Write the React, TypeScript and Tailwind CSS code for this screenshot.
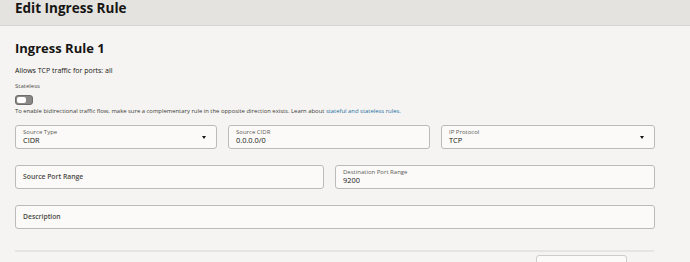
const Field = ({ label, value, select, placeholder }: { label?: string; value?: string; select?: boolean; placeholder?: string }) => {
  return (
    <div className="relative h-6 bg-[#fbfaf8] border border-[#bdbbb7] rounded-[3px] px-[7px] flex flex-col justify-center">
      {placeholder ? (
        <span className="text-[6.8px] font-semibold text-[#4a4945] leading-none">{placeholder}</span>
      ) : (
        <>
          <span className="text-[6px] text-[#5c5b57] leading-none">{label}</span>
          <span className="text-[7.4px] text-[#161513] leading-none mt-[2px]">{value}</span>
        </>
      )}
      {select && (
        <span className="absolute right-[10px] top-[10px] w-0 h-0 border-l-[2.5px] border-r-[2.5px] border-t-[3px] border-l-transparent border-r-transparent border-t-[#161513]" />
      )}
    </div>
  );
};

export default function App() {
  return (
    <div className="w-[690px] h-[262px] overflow-hidden bg-[#f5f4f2] text-[#161513]" style={{ fontFamily: '"Open Sans", "Noto Sans", sans-serif' }}>
      <header className="h-[26px] bg-[#e4e3df] border-b border-[#d6d5d1] px-[15px] flex items-end">
        <h1 className="text-[13.5px] font-bold leading-none -translate-y-[10px]">Edit Ingress Rule</h1>
      </header>

      <div className="px-[15px]">
        <h2 className="mt-[16px] text-[13px] font-bold leading-none">Ingress Rule 1</h2>
        <p className="mt-[12px] text-[7px] leading-none">Allows TCP traffic for ports: all</p>
        <p className="mt-[9px] text-[6px] leading-none text-[#4f4e4a]">Stateless</p>
        <div className="mt-[6px] w-[18px] h-[10px] rounded-[3px] border-[1.5px] border-[#6f6d69] bg-[#8a8884] p-[1px] flex">
          <div className="w-[9px] h-full rounded-[2px] bg-white" />
        </div>
        <p className="mt-[4px] text-[5.9px] leading-none text-[#3d3c38]">
          To enable bidirectional traffic flow, make sure a complementary rule in the opposite direction exists. Learn about{" "}
          <a className="text-[#1e6fa0]">stateful and stateless rules.</a>
        </p>

        <div className="w-[640px] mt-[10px] flex flex-col gap-[16px]">
          <div className="grid grid-cols-[202px_202px_1fr] gap-[11px]">
            <Field label="Source Type" value="CIDR" select />
            <Field label="Source CIDR" value="0.0.0.0/0" />
            <Field label="IP Protocol" value="TCP" select />
          </div>
          <div className="grid grid-cols-[309px_1fr] gap-[11px]">
            <Field placeholder="Source Port Range" />
            <Field label="Destination Port Range" value="9200" />
          </div>
          <Field placeholder="Description" />
        </div>

        <div className="w-[639px] mt-[21px] h-[2px] bg-[#e6e5e1]" />
        <div className="w-[639px] flex justify-end pr-[27px] mt-[3px]">
          <div className="w-[91px] h-[10px] bg-[#fbfaf8] border border-[#cfcdc9] rounded-t-[3px]" />
        </div>
      </div>
    </div>
  );
}
